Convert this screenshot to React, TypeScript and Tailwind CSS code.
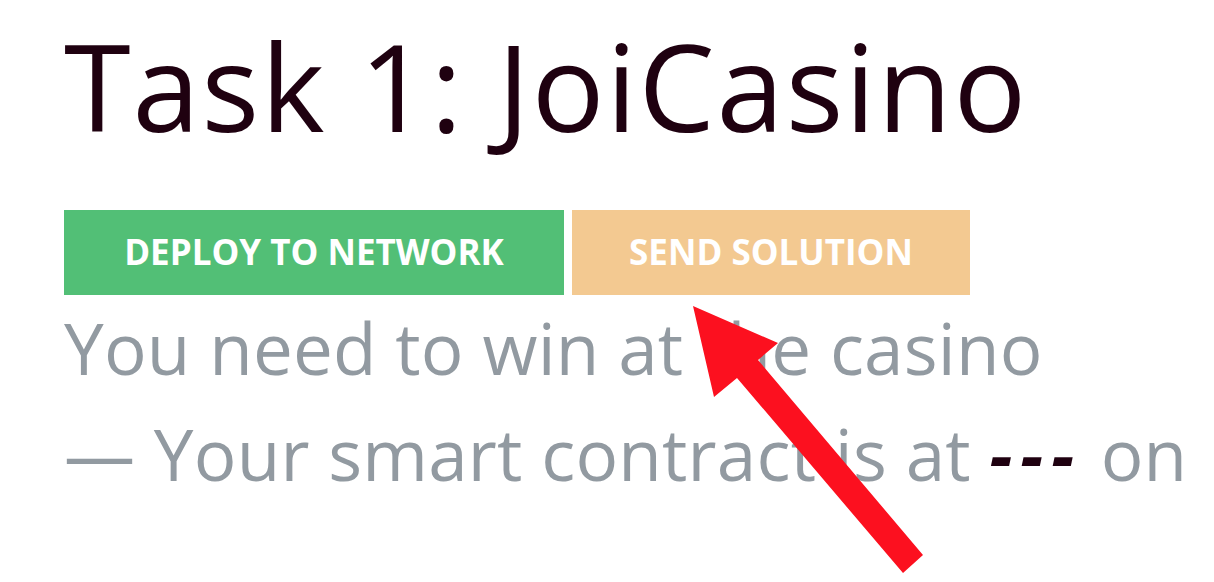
export default function App() {
  return (
    <div className="relative h-[582px] w-[1214px] overflow-hidden bg-white font-['Open_Sans',sans-serif]">
      <div className="pl-16 pt-[14px]">
        <h1 className="text-[121px] leading-[142px] font-normal tracking-[1.8px] text-[#1f0110]">
          Task 1: JoiCasino
        </h1>

        <div className="mt-[54px] flex gap-2">
          <button className="h-[85px] w-[500px] bg-[#52bf76] text-[35px] font-bold uppercase text-white">
            Deploy to network
          </button>
          <button className="h-[85px] w-[398px] bg-[#f3c991] text-[35px] font-bold uppercase text-white">
            Send solution
          </button>
        </div>

        <div className="whitespace-nowrap text-[71px] leading-[106px] tracking-[0.2px] text-[#929aa1]">
          <p>You need to win at the casino</p>
          <p>
            — Your smart contract is at{" "}
            <em className="font-bold tracking-[8px] text-[#1f0110]">---</em> on
          </p>
        </div>
      </div>

      <svg className="absolute left-0 top-0" width="1214" height="582" viewBox="0 0 1214 582">
        <polygon
          points="693,306 778,343 758,360 923,555 903,573 737,378 714,397"
          fill="#fc101f"
        />
      </svg>
    </div>
  )
}
